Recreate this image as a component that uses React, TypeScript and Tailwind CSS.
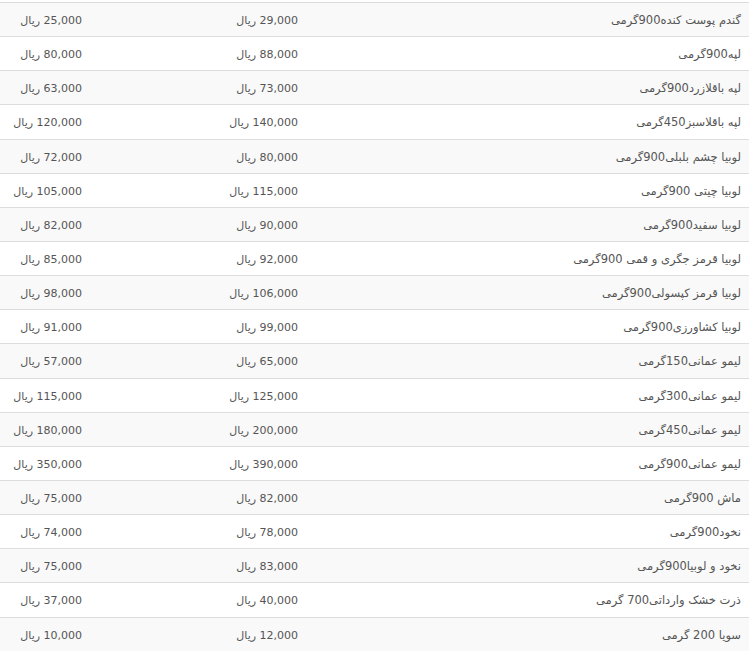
const rows: [string, string, string][] = [
  ["گندم پوست کنده900گرمی", "29,000", "25,000"],
  ["لپه900گرمی", "88,000", "80,000"],
  ["لپه باقلازرد900گرمی", "73,000", "63,000"],
  ["لپه باقلاسبز450گرمی", "140,000", "120,000"],
  ["لوبیا چشم بلبلی900گرمی", "80,000", "72,000"],
  ["لوبیا چیتی 900گرمی", "115,000", "105,000"],
  ["لوبیا سفید900گرمی", "90,000", "82,000"],
  ["لوبیا قرمز جگری و قمی 900گرمی", "92,000", "85,000"],
  ["لوبیا قرمز کپسولی900گرمی", "106,000", "98,000"],
  ["لوبیا کشاورزی900گرمی", "99,000", "91,000"],
  ["لیمو عمانی150گرمی", "65,000", "57,000"],
  ["لیمو عمانی300گرمی", "125,000", "115,000"],
  ["لیمو عمانی450گرمی", "200,000", "180,000"],
  ["لیمو عمانی900گرمی", "390,000", "350,000"],
  ["ماش 900گرمی", "82,000", "75,000"],
  ["نخود900گرمی", "78,000", "74,000"],
  ["نخود و لوبیا900گرمی", "83,000", "75,000"],
  ["ذرت خشک وارداتی700 گرمی", "40,000", "37,000"],
  ["سویا 200 گرمی", "12,000", "10,000"],
];

export default function App() {
  return (
    <div className="bg-white w-[755px] h-[662px] pt-[2px] overflow-hidden">
      <table
        dir="rtl"
        className="w-[749px] border-collapse table-fixed text-[11px] leading-[17.14px] text-[#555] font-['DejaVu_Sans',sans-serif]"
      >
        <colgroup>
          <col className="w-[443px]" />
          <col className="w-[216px]" />
          <col className="w-[90px]" />
        </colgroup>
        <tbody>
          {rows.map(([name, price, offer], i) => (
            <tr key={i} className={i % 2 === 0 ? "bg-[#f9f9f9]" : "bg-white"}>
              <td className="border-t border-[#ddd] px-2 pt-[9px] pb-[7px] text-right whitespace-nowrap text-[11.5px]">
                {name}
              </td>
              <td className="border-t border-[#ddd] px-2 pt-[9px] pb-[7px] text-right whitespace-nowrap">
                {price} ریال
              </td>
              <td className="border-t border-[#ddd] px-2 pt-[9px] pb-[7px] text-right whitespace-nowrap">
                {offer} ریال
              </td>
            </tr>
          ))}
        </tbody>
      </table>
    </div>
  );
}
